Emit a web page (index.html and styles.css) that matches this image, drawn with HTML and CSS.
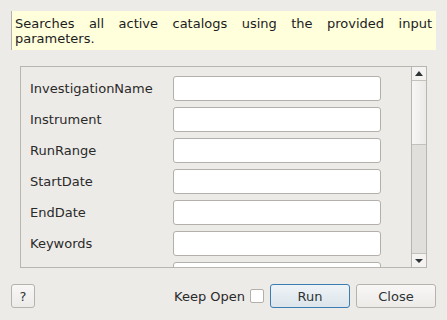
FILE: index.html
```html
<!DOCTYPE html>
<html>
	<head>
		<meta charset="UTF-8">
		<title>Search catalogs</title>
		<link rel="stylesheet" href="styles.css">
	</head>
	<body>
		<div class="dialog">
			<div class="info">
				Searches all active catalogs using the provided input parameters.
			</div>
			<div class="frame">
				<div class="rows">
					<label class="lbl">InvestigationName</label><input class="field" type="text">
					<label class="lbl">Instrument</label><input class="field" type="text">
					<label class="lbl">RunRange</label><input class="field" type="text">
					<label class="lbl">StartDate</label><input class="field" type="text">
					<label class="lbl">EndDate</label><input class="field" type="text">
					<label class="lbl">Keywords</label><input class="field" type="text">
					<label class="lbl"></label><input class="field" type="text">
				</div>
				<div class="scrollbar">
					<div class="sb_btn"><span class="arr_up"></span></div>
					<div class="sb_handle"></div>
					<div class="sb_track"></div>
					<div class="sb_btn sb_btn_down"><span class="arr_down"></span></div>
				</div>
			</div>
			<div class="footer">
				<button class="btn btn_help">?</button>
				<div class="spacer"></div>
				<span class="keep">Keep Open</span>
				<span class="check"></span>
				<button class="btn btn_run">Run</button>
				<button class="btn btn_close">Close</button>
			</div>
		</div>
	</body>
</html>
```

FILE: styles.css
```css
* {
	margin: 0;
	padding: 0;
	box-sizing: border-box;
}
html, body {
	background: #edebe7;
	font-family: "DejaVu Sans", sans-serif;
	font-size: 13px;
	color: #2e3436;
}
body {
	width: 447px;
	height: 320px;
	overflow: hidden;
}
.dialog {
	display: flex;
	flex-direction: column;
	padding: 11px 11px 0 11px;
}
.info {
	height: 39px;
	background: #ffffdc;
	border-left: 1px solid #b4b1ac;
	padding: 5px 4px 0 3px;
	line-height: 15px;
	text-align: justify;
	color: #1c1c1c;
}
.frame {
	margin: 16px 9px 0 9px;
	height: 202px;
	border: 1px solid #b9b6b1;
	display: flex;
	overflow: hidden;
}
.rows {
	flex: 1;
	display: grid;
	grid-template-columns: 143px 208px;
	grid-auto-rows: 25px;
	row-gap: 6px;
	padding: 9px 0 0 9px;
	overflow: hidden;
}
.lbl {
	display: flex;
	align-items: center;
	color: #2a2a2a;
}
.field {
	height: 25px;
	border: 1px solid #b3b0ab;
	border-radius: 3px;
	background: #fff;
	outline: none;
}
.scrollbar {
	width: 15px;
	border-left: 1px solid #b9b6b1;
	display: flex;
	flex-direction: column;
}
.sb_btn {
	height: 14px;
	display: flex;
	align-items: center;
	justify-content: center;
	background: #f4f3f1;
	border-bottom: 1px solid #c4c1bc;
}
.sb_btn_down {
	border-bottom: none;
	border-top: 1px solid #c4c1bc;
}
.arr_up {
	width: 0;
	height: 0;
	border-left: 4px solid transparent;
	border-right: 4px solid transparent;
	border-bottom: 5px solid #2e3436;
}
.arr_down {
	width: 0;
	height: 0;
	border-left: 4px solid transparent;
	border-right: 4px solid transparent;
	border-top: 4px solid #2e3436;
}
.sb_handle {
	height: 64px;
	background: linear-gradient(to right, #f7f6f5, #eceae7);
	border-bottom: 1px solid #c4c1bc;
}
.sb_track {
	flex: 1;
	background: #e0dfdb;
}
.footer {
	margin-top: 16px;
	height: 24px;
	display: flex;
	align-items: center;
}
.spacer {
	flex: 1;
}
.btn {
	height: 24px;
	font-family: "DejaVu Sans", sans-serif;
	font-size: 13px;
	color: #2e3436;
	border: 1px solid #b6b3ae;
	border-radius: 3px;
	background: linear-gradient(#f8f7f6, #ecebe8);
}
.btn_help {
	width: 24px;
}
.keep {
	color: #2a2a2a;
}
.check {
	width: 14px;
	height: 14px;
	margin: 0 6px 0 5px;
	border: 1px solid #b3b0ab;
	border-radius: 2px;
	background: #fff;
}
.btn_run {
	width: 80px;
	border-color: #3b7db3;
	background: linear-gradient(#eef3f6, #dce5eb);
}
.btn_close {
	width: 80px;
	margin-left: 6px;
}
```
